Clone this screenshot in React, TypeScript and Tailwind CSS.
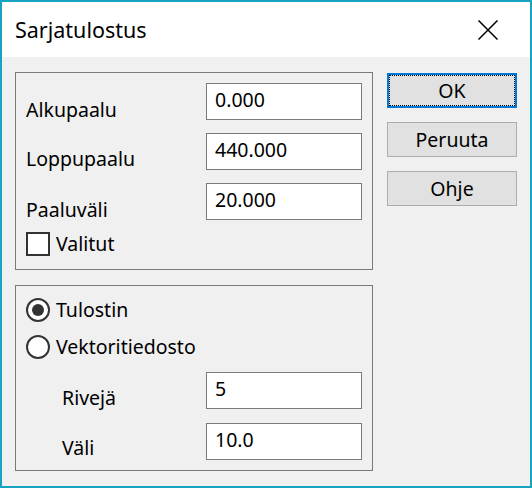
const FONT = { fontFamily: '"Noto Sans", "Open Sans", sans-serif' };

function Field({ label, value, indent = false, labelTop = 15 }: { label: string; value: string; indent?: boolean; labelTop?: number }) {
  return (
    <div className="flex h-[37px] items-start">
      <div
        className={`${indent ? 'pl-[46px] w-[190px]' : 'pl-[10px] w-[190px]'} leading-[24px]`}
        style={{ marginTop: labelTop }}
      >
        {label}
      </div>
      <div className="h-[37px] w-[156px] border border-[#7a7a7a] bg-white pl-[8px] pt-[2px] leading-[28px]">
        {value}
      </div>
    </div>
  );
}

function Radio({ checked, label }: { checked?: boolean; label: string }) {
  return (
    <div className="flex items-center pl-[10px] h-[24px]">
      <span className="flex h-[24px] w-[24px] items-center justify-center rounded-full border-2 border-[#333333] bg-white">
        {checked && <span className="h-[12px] w-[12px] rounded-full bg-[#333333]" />}
      </span>
      <span className="ml-[6px] leading-[24px]">{label}</span>
    </div>
  );
}

function Button({ label, focused }: { label: string; focused?: boolean }) {
  return (
    <div
      className={`relative flex h-[35px] w-[130px] items-center justify-center bg-[#e1e1e1] ${
        focused ? 'border-2 border-[#0078d7]' : 'border border-[#adadad]'
      }`}
    >
      {focused && <span className="absolute inset-0 border border-dotted border-black" />}
      <span className="leading-[24px]">{label}</span>
    </div>
  );
}

export default function App() {
  return (
    <div
      className="flex h-[488px] w-[532px] flex-col border-2 border-[#18a2c4] bg-[#f0f0f0] text-[19.5px] text-black"
      style={FONT}
    >
      <div className="flex h-[55px] items-center justify-between bg-white pl-[13px] pr-[32px]">
        <span className="text-[21.5px] leading-[28px] pt-[1px]">Sarjatulostus</span>
        <svg width="20" height="20" viewBox="0 0 20 20" className="mt-[1px]">
          <path d="M0.5 0.5 L19.5 19.5 M19.5 0.5 L0.5 19.5" stroke="#000" strokeWidth="1.5" fill="none" />
        </svg>
      </div>

      <div className="flex pl-[13px] pt-[15px]">
        <div className="flex w-[358px] flex-col gap-[15px]">
          <div className="h-[198px] border border-[#7a7a7a] pt-[10px]">
            <div className="flex flex-col gap-[13px]">
              <Field label="Alkupaalu" value="0.000" labelTop={15} />
              <Field label="Loppupaalu" value="440.000" labelTop={14} />
              <Field label="Paaluväli" value="20.000" labelTop={15} />
            </div>
            <div className="mt-[12px] flex items-center pl-[10px]">
              <span className="h-[24px] w-[24px] border-2 border-[#333333] bg-white" />
              <span className="ml-[6px] leading-[24px]">Valitut</span>
            </div>
          </div>

          <div className="h-[186px] border border-[#7a7a7a] pt-[12px]">
            <div className="flex flex-col gap-[13px]">
              <Radio checked label="Tulostin" />
              <Radio label="Vektoritiedosto" />
            </div>
            <div className="mt-[13px] flex flex-col gap-[14px]">
              <Field label="Rivejä" value="5" indent labelTop={14} />
              <Field label="Väli" value="10.0" indent labelTop={13} />
            </div>
          </div>
        </div>

        <div className="ml-[14px] flex flex-col gap-[14px] pt-[1px]">
          <Button label="OK" focused />
          <Button label="Peruuta" />
          <Button label="Ohje" />
        </div>
      </div>
    </div>
  );
}
